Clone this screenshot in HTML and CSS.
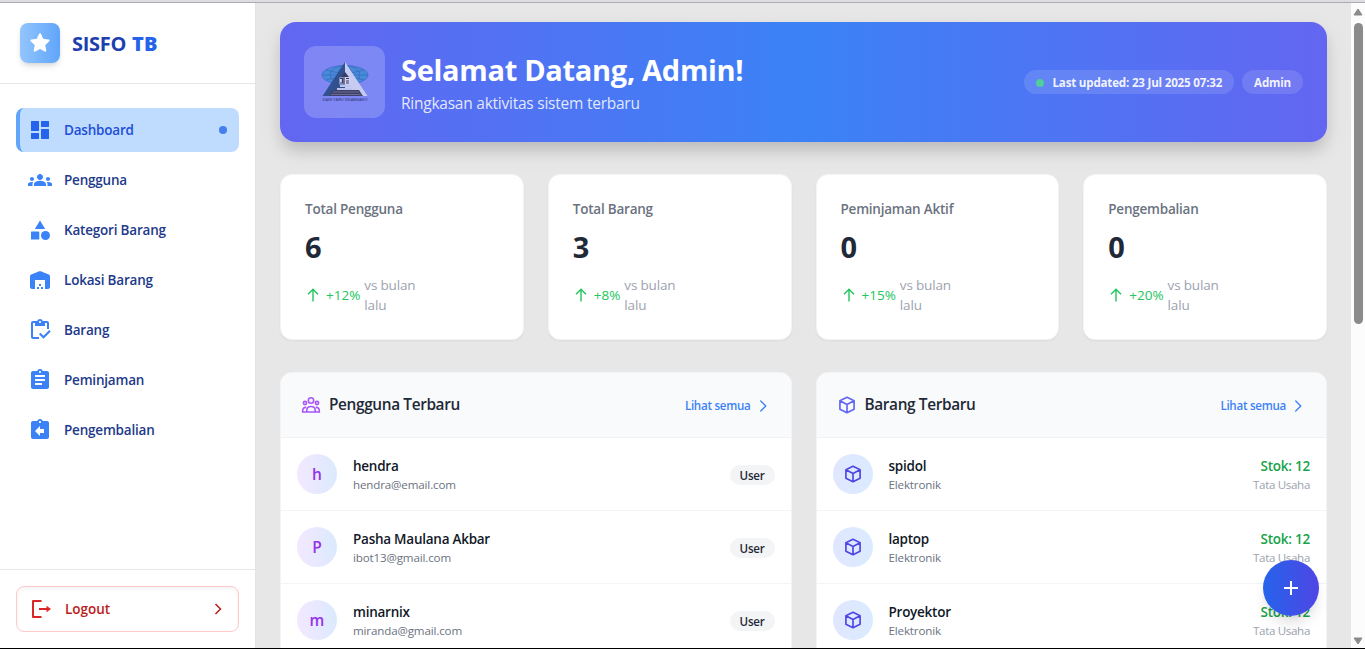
FILE: index.html
```html
<!DOCTYPE html>
<html lang="id">
<head>
<meta charset="utf-8">
<title>SISFO TB</title>
<link rel="stylesheet" href="styles.css">
</head>
<body>
<svg class="defs" aria-hidden="true">
  <symbol id="cube" viewBox="0 0 24 24"><path d="M12 2.800 20.500 7v10L12 21.300 3.500 17V7zM3.500 7 12 11.300 20.500 7M12 11.300v10" fill="none" stroke="currentColor" stroke-width="2" stroke-linejoin="round"/></symbol>
  <symbol id="chevron" viewBox="0 0 16 16"><path d="M5.700 3 10.800 8l-5.100 5" fill="none" stroke="currentColor" stroke-width="1.300" stroke-linecap="round" stroke-linejoin="round"/></symbol>
  <symbol id="up" viewBox="0 0 16 16"><path d="M8 14.500V2.500M3 7.300l5-5 5 5" fill="none" stroke="currentColor" stroke-width="1.400"/></symbol>
</svg>
<div class="app">
  <aside class="sidebar">
    <div class="brand">
      <div class="brand-mark"><svg viewBox="0 0 24 24"><path d="m12 3.200 2.600 5.500 6 .8-4.400 4.200 1.100 6L12 16.900 6.700 19.700l1.100-6L3.400 9.500l6-.8z" fill="#fff" stroke="#fff" stroke-width="2" stroke-linejoin="round"/></svg></div>
      <div class="brand-name">SISFO <b>TB</b></div>
    </div>
    <nav class="nav">
      <a class="nav-item active"><svg viewBox="0 0 24 24"><path d="M3.500 13h7c.3 0 .5-.2.5-.5v-9c0-.3-.2-.5-.5-.5h-7c-.3 0-.5.2-.5.5v9c0 .3.2.5.5.5zm0 8h7c.3 0 .5-.2.5-.5v-5c0-.3-.2-.5-.5-.5h-7c-.3 0-.5.2-.5.5v5c0 .3.2.5.5.5zm10 0h7c.3 0 .5-.2.5-.5v-9c0-.3-.2-.5-.5-.5h-7c-.3 0-.5.2-.5.5v9c0 .3.2.5.5.5zM13 3.500v5c0 .3.2.5.5.5h7c.3 0 .5-.2.5-.5v-5c0-.3-.2-.5-.5-.5h-7c-.3 0-.5.2-.5.5z"/></svg><span>Dashboard</span><i class="nav-dot"></i></a>
      <a class="nav-item"><svg viewBox="0 0 24 24"><path d="M12 12.750c1.630 0 3.070.390 4.240.9 1.080.480 1.760 1.560 1.760 2.730V18H6v-1.610c0-1.180.680-2.260 1.760-2.730 1.170-.520 2.610-.910 4.240-.910zM4 13c1.100 0 2-.9 2-2s-.9-2-2-2-2 .9-2 2 .9 2 2 2zm1.130 1.100C4.760 14.040 4.390 14 4 14c-.990 0-1.930.210-2.780.580C.480 14.900 0 15.620 0 16.430V18h4.500v-1.610c0-.830.230-1.610.630-2.290zM20 13c1.100 0 2-.9 2-2s-.9-2-2-2-2 .9-2 2 .9 2 2 2zm4 3.430c0-.810-.480-1.530-1.220-1.850C21.930 14.210 20.990 14 20 14c-.390 0-.760.040-1.130.1.4.680.630 1.460.630 2.290V18H24v-1.570zM12 6c1.660 0 3 1.340 3 3s-1.340 3-3 3-3-1.340-3-3 1.340-3 3-3z"/></svg><span>Pengguna</span></a>
      <a class="nav-item"><svg viewBox="0 0 24 24"><path d="M12 2.500 6.800 11h10.400z" /><circle cx="17.500" cy="17.500" r="4.500"/><rect x="3" y="13.500" width="8.300" height="8" rx=".6"/></svg><span>Kategori Barang</span></a>
      <a class="nav-item"><svg viewBox="0 0 24 24"><path d="M22 19V8.350c0-.820-.5-1.550-1.260-1.860l-8-3.200a2 2 0 0 0-1.480 0l-8 3.200C2.500 6.800 2 7.540 2 8.350V19c0 1.100.9 2 2 2h3v-9h10v9h3c1.100 0 2-.9 2-2zm-11 0H9v2h2v-2zm2-3h-2v2h2v-2zm2 3h-2v2h2v-2z"/></svg><span>Lokasi Barang</span></a>
      <a class="nav-item"><svg viewBox="0 0 24 24"><path d="M5 5h2v3h10V5h2v6h2V5c0-1.100-.9-2-2-2h-4.180C14.400 1.840 13.300 1 12 1S9.600 1.840 9.180 3H5c-1.100 0-2 .9-2 2v14c0 1.100.9 2 2 2h6v-2H5V5zm7-2c.550 0 1 .450 1 1s-.450 1-1 1-1-.450-1-1 .450-1 1-1z"/><path d="m21.250 12-5.740 5.730-3.010-3-1.500 1.500 4.510 4.510L22.750 13.500z"/></svg><span>Barang</span></a>
      <a class="nav-item"><svg viewBox="0 0 24 24"><path d="M19 3h-4.180C14.400 1.840 13.300 1 12 1c-1.300 0-2.400.840-2.820 2H5c-1.100 0-2 .9-2 2v14c0 1.100.9 2 2 2h14c1.100 0 2-.9 2-2V5c0-1.100-.9-2-2-2zm-7 0c.550 0 1 .450 1 1s-.450 1-1 1-1-.450-1-1 .450-1 1-1zm2 14H7v-2h7v2zm3-4H7v-2h10v2zm0-4H7V7h10v2z"/></svg><span>Peminjaman</span></a>
      <a class="nav-item"><svg viewBox="0 0 24 24"><path d="M19 3h-4.180C14.400 1.840 13.300 1 12 1s-2.400.840-2.820 2H5c-1.100 0-2 .9-2 2v14c0 1.100.9 2 2 2h14c1.100 0 2-.9 2-2V5c0-1.100-.9-2-2-2zm-7 0c.550 0 1 .450 1 1s-.450 1-1 1-1-.450-1-1 .450-1 1-1zm4 12h-4v3l-5-5 5-5v3h4v4z"/></svg><span>Pengembalian</span></a>
    </nav>
    <div class="sidebar-foot">
      <button class="logout">
        <svg class="logout-icon" viewBox="0 0 24 24"><path d="M13.500 4H5v16h8.500" fill="none" stroke="currentColor" stroke-width="2" stroke-linejoin="round"/><path d="M11 12h8" stroke="currentColor" stroke-width="2"/><path d="m18.500 8.800 4.500 3.200-4.500 3.200z"/></svg>
        <span>Logout</span>
        <svg class="logout-go" viewBox="0 0 16 16"><path d="m5.500 3 5 5-5 5" fill="none" stroke="currentColor" stroke-width="1.500"/></svg>
      </button>
    </div>
  </aside>

  <main class="main">
    <section class="hero">
      <div class="hero-logo">
        <svg viewBox="0 0 48 44">
          <ellipse cx="24" cy="14" rx="23" ry="9.500" fill="#438ad8" stroke="#3569bd" stroke-width=".7"/>
          <g fill="none" stroke="#3466b4" stroke-width=".7"><ellipse cx="24" cy="14" rx="15" ry="9.500"/><ellipse cx="24" cy="14" rx="7" ry="9.500"/><path d="M1 14h46M5 9q19 6 38 0M5 19q19-6 38 0"/></g>
          <path d="M24 1v34H1.500z" fill="#2a4c88"/><path d="M24 1v34h22.500z" fill="#cdd1f2"/>
          <path d="m24 11-4 5h8z" fill="#343655"/><path d="M18.500 16.500h11v7h-11z" fill="#d5d8f2"/><path d="M19 17.500h2.500V22H19M23 17v6M25 17.500h3M25 20h3M25 22h3" fill="none" stroke="#343655" stroke-width="1.200"/>
          <path d="M19 24h11v2H19zM16 27h15v2H16z" fill="#c4c9ef"/><path d="M12 29h26l4 6H8z" fill="#3c3d5d"/><path d="M12 31h26M10 33.500h30" stroke="#777aa6" stroke-width=".7"/>
          <text x="1.500" y="40" textLength="45" lengthAdjust="spacingAndGlyphs">DANI TARU NGABHAKTI</text>
        </svg>
      </div>
      <div class="hero-text">
        <h1>Selamat Datang, Admin!</h1>
        <p>Ringkasan aktivitas sistem terbaru</p>
      </div>
      <div class="hero-pills">
        <span class="pill updated"><i></i>Last updated: 23 Jul 2025 07:32</span>
        <span class="pill">Admin</span>
      </div>
    </section>

    <section class="stats">
      <article class="stat"><h2>Total Pengguna</h2><strong>6</strong><div class="trend"><svg><use href="#up"/></svg><span>+12%</span><em>vs bulan lalu</em></div></article>
      <article class="stat"><h2>Total Barang</h2><strong>3</strong><div class="trend"><svg><use href="#up"/></svg><span>+8%</span><em>vs bulan lalu</em></div></article>
      <article class="stat"><h2>Peminjaman Aktif</h2><strong>0</strong><div class="trend"><svg><use href="#up"/></svg><span>+15%</span><em>vs bulan lalu</em></div></article>
      <article class="stat"><h2>Pengembalian</h2><strong>0</strong><div class="trend"><svg><use href="#up"/></svg><span>+20%</span><em>vs bulan lalu</em></div></article>
    </section>

    <section class="panels">
      <article class="panel">
        <header class="panel-head">
          <svg class="panel-icon purple" viewBox="0 0 20 20"><g fill="none" stroke="currentColor" stroke-width="1.600"><circle cx="10" cy="5.500" r="2.700"/><circle cx="4" cy="8" r="1.600"/><circle cx="16" cy="8" r="1.600"/><path d="M5.800 17v-1.500c0-2.400 1.700-4 4.200-4s4.200 1.600 4.200 4V17M5.300 12.400c-2.300-.3-3.600 1-3.600 2.800V17h16.600v-1.800c0-1.800-1.300-3.100-3.600-2.800"/></g></svg>
          <h3>Pengguna Terbaru</h3><a class="all">Lihat semua<svg><use href="#chevron"/></svg></a>
        </header>
        <div class="row"><div class="avatar">h</div><div class="who"><b>hendra</b><small>hendra@email.com</small></div><span class="role">User</span></div>
        <div class="row"><div class="avatar">P</div><div class="who"><b>Pasha Maulana Akbar</b><small>ibot13@gmail.com</small></div><span class="role">User</span></div>
        <div class="row"><div class="avatar">m</div><div class="who"><b>minarnix</b><small>miranda@gmail.com</small></div><span class="role">User</span></div>
      </article>
      <article class="panel">
        <header class="panel-head">
          <svg class="panel-icon indigo"><use href="#cube"/></svg>
          <h3>Barang Terbaru</h3><a class="all">Lihat semua<svg><use href="#chevron"/></svg></a>
        </header>
        <div class="row"><div class="avatar item"><svg><use href="#cube"/></svg></div><div class="who"><b>spidol</b><small>Elektronik</small></div><div class="stock"><b>Stok: 12</b><small>Tata Usaha</small></div></div>
        <div class="row"><div class="avatar item"><svg><use href="#cube"/></svg></div><div class="who"><b>laptop</b><small>Elektronik</small></div><div class="stock"><b>Stok: 12</b><small>Tata Usaha</small></div></div>
        <div class="row"><div class="avatar item"><svg><use href="#cube"/></svg></div><div class="who"><b>Proyektor</b><small>Elektronik</small></div><div class="stock"><b>Stok: 12</b><small>Tata Usaha</small></div></div>
      </article>
    </section>
  </main>

  <div class="scrollbar">
    <svg viewBox="0 0 10 8"><path d="M5 1 9 7H1z" stroke="currentColor" stroke-linejoin="round"/></svg>
    <div class="thumb"></div>
    <svg class="down" viewBox="0 0 10 8"><path d="M5 7 9 1H1z" stroke="currentColor" stroke-linejoin="round"/></svg>
  </div>
  <button class="fab"><svg viewBox="0 0 24 24"><path d="M12 5v14M5 12h14" stroke="#fff" stroke-width="2"/></svg></button>
</div>
</body>
</html>
```
FILE: styles.css
```css
* { box-sizing: border-box; }
body { margin: 0; font-family: "Open Sans", "Noto Sans", sans-serif; font-size: 13.5px; line-height: 20px; color: #111827; overflow: hidden; }
h1, h2, h3, p { margin: 0; }
button { font: inherit; background: none; border: 0; padding: 0; }
svg { display: block; flex: none; fill: currentColor; }
.defs { position: absolute; width: 0; height: 0; }

.app { position: relative; display: flex; height: 649px; overflow: hidden; background: #e7e7e7; border-top: 2px solid #dcdde1; border-bottom: 1px solid #000; box-shadow: inset 0 1px #abadb2; padding-top: 1px; }

/* Sidebar */
.sidebar { flex: none; width: 256px; display: flex; flex-direction: column; background: #fff; border-right: 1px solid #e2e4e8; }
.brand { display: flex; align-items: center; gap: 12px; height: 81px; padding: 0 20px; border-bottom: 1px solid #e5e7eb; }
.brand-mark { display: grid; place-items: center; width: 40px; height: 40px; border-radius: 8px; background: linear-gradient(to right, #93c5fd, #60a5fa); box-shadow: 0 4px 6px -1px rgba(0,0,0,.12), 0 2px 4px -2px rgba(0,0,0,.1); }
.brand-mark svg { width: 24px; height: 24px; }
.brand-name { font-size: 20px; line-height: 28px; font-weight: 700; color: #1e40af; letter-spacing: -.3px; padding-top: 2px; }
.brand-name b { margin-left: 1px; color: #2563eb; font-weight: 800; letter-spacing: .2px; }
.nav { flex: 1; display: flex; flex-direction: column; gap: 6px; padding: 24px 16px; }
.nav-item { display: flex; align-items: center; gap: 12px; height: 44px; padding: 0 12px; border-radius: 8px; font-weight: 600; letter-spacing: -.2px; color: #1e3a8a; }
.nav-item svg { width: 24px; height: 24px; color: #3b82f6; }
.nav-item.active { background: #bfdbfe; color: #1d4ed8; border-left: 4px solid #60a5fa; padding-left: 8px; }
.nav-item.active svg { color: #2563eb; }
.nav-dot { width: 8px; height: 8px; margin-left: auto; border-radius: 50%; background: #457fee; }
.sidebar-foot { padding: 16px; border-top: 1px solid #e5e7eb; }
.logout { display: flex; align-items: center; width: 100%; height: 46px; padding: 0 12px; border: 1px solid #fecaca; border-radius: 8px; box-shadow: inset 0 2px 4px rgba(0,0,0,.05); color: #b91c1c; font-weight: 600; letter-spacing: 0; }
.logout-icon { width: 24px; height: 24px; margin: 0 13px 0 -1px; color: #dc2626; }
.logout-go { width: 16px; height: 16px; margin-left: auto; }

/* Main column */
.main { flex: 1; min-width: 0; display: flex; flex-direction: column; gap: 32px; padding: 19px 24px 0; }
.main > * { flex: none; }
.hero { display: flex; align-items: center; gap: 16px; height: 120px; padding: 24px; border-radius: 16px; color: #fff; background: linear-gradient(to right, #6366f1, #3b82f6, #6366f1); box-shadow: 0 10px 15px -3px rgba(0,0,0,.14), 0 8px 24px rgba(0,0,0,.08); }
.hero-logo { display: grid; place-items: center; width: 81px; height: 72px; border-radius: 12px; background: rgba(255,255,255,.2); }
.hero-logo svg { width: 48px; height: 44px; margin-top: 2px; overflow: visible; opacity: .92; }
.hero-logo text { font: 600 4px "Open Sans", sans-serif; fill: #343b80; }
.hero-text { display: grid; gap: 3px; padding-top: 2px; }
.hero h1 { font-size: 29px; line-height: 36px; font-weight: 700; letter-spacing: -.3px; }
.hero p { font-size: 15.5px; line-height: 24px; color: rgba(255,255,255,.85); letter-spacing: -.24px; }
.hero-pills { display: flex; gap: 8px; margin-left: auto; }
.pill { display: flex; align-items: center; height: 24px; padding: 1px 12px 0; border-radius: 12px; background: rgba(255,255,255,.12); font-size: 11.6px; font-weight: 700; color: rgba(255,255,255,.92); white-space: nowrap; letter-spacing: -.2px; }
.pill i { width: 8px; height: 8px; margin-right: 8px; border-radius: 50%; background: #50cd9b; }

.stats { display: grid; grid-template-columns: repeat(4, 1fr); gap: 24px; }
.stat { height: 166px; padding: 24px; background: #fff; border: 1px solid #f3f4f6; border-radius: 12px; box-shadow: 0 1px 2px rgba(0,0,0,.05); }
.stat h2 { font-size: 13.5px; line-height: 20px; font-weight: 600; color: #6b7280; letter-spacing: -.22px; }
.stat strong { display: block; margin: 10px 0; font-size: 29px; line-height: 36px; font-weight: 700; color: #1f2937; }
.trend { display: flex; align-items: center; color: #22c55e; letter-spacing: 0; }
.trend svg { width: 16px; height: 16px; margin-right: 5px; }
.trend em { width: 60px; margin-left: 4px; font-style: normal; color: #9ca3af; letter-spacing: -.17px; }

.panels { display: grid; grid-template-columns: 1fr 1fr; gap: 24px; }
.panel { height: 320px; overflow: hidden; background: #fff; border: 1px solid #f3f4f6; border-radius: 12px; }
.panel-head { display: flex; align-items: center; height: 65px; padding: 0 20px; background: #f9fafb; border-bottom: 1px solid #f0f1f4; }
.panel-icon { width: 20px; height: 20px; margin-right: 8px; }
.purple { color: #a855f7; }
.indigo { color: #6366f1; }
.panel h3 { font-size: 15.4px; line-height: 24px; font-weight: 600; color: #1f2937; letter-spacing: -.37px; }
.all { display: flex; align-items: center; gap: 4px; margin-left: auto; padding-top: 1px; font-size: 11.6px; font-weight: 600; color: #3b82f6; letter-spacing: -.28px; }
.all svg { width: 16px; height: 16px; }
.row { display: flex; align-items: center; height: 73px; padding: 0 16px; border-bottom: 1px solid #f3f4f6; }
.avatar { display: grid; place-items: center; width: 40px; height: 40px; margin-right: 16px; border-radius: 50%; background: linear-gradient(to right, #f3e8ff, #dbeafe); color: #9333ea; font-size: 15.5px; font-weight: 600; }
.avatar.item { background: linear-gradient(to right, #e0e7ff, #dbeafe); color: #4f46e5; }
.avatar svg { width: 20px; height: 20px; }
.who, .stock { padding-top: 1px; }
.who b, .stock b { display: block; font-weight: 600; letter-spacing: -.25px; }
.who small, .stock small { display: block; font-size: 11.6px; line-height: 17px; color: #6b7280; letter-spacing: -.15px; }
.role { height: 20px; margin-left: auto; padding: 1px 10px 0; border-radius: 10px; background: #f3f4f6; font-size: 11.6px; font-weight: 600; color: #1f2937; letter-spacing: -.25px; margin-top: 2px; }
.stock { margin-left: auto; text-align: right; }
.stock b { color: #16a34a; }
.stock small { color: #9ca3af; letter-spacing: -.34px; }

/* Window scrollbar */
.scrollbar { flex: none; display: flex; flex-direction: column; align-items: center; width: 14px; padding: 5px 0 3px; background: #fcfcfc; color: #8b8b8b; }
.scrollbar svg { width: 10px; height: 8px; }
.thumb { width: 9px; height: 301px; margin-top: 7px; border-radius: 5px; background: #8b8b8b; }
.down { margin-top: auto; }

/* Floating action button over the lists */
.fab { position: absolute; right: 46px; bottom: 32px; display: grid; place-items: center; width: 56px; height: 56px; border-radius: 50%; background: linear-gradient(to right, #2563eb, #4f46e5); box-shadow: 0 10px 15px -3px rgba(0,0,0,.12), 0 4px 6px -4px rgba(0,0,0,.1); }
.fab svg { width: 24px; height: 24px; }
```
